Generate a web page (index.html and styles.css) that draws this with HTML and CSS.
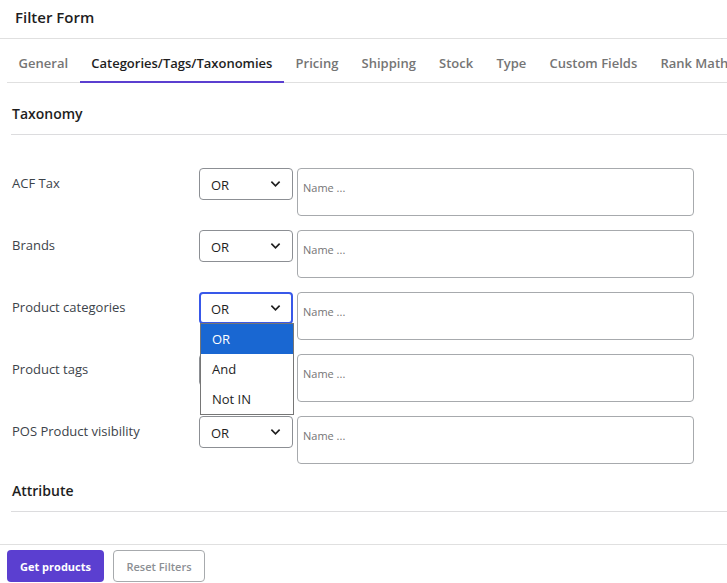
FILE: index.html
```html
<!DOCTYPE html>
<html lang="en">
<head>
    <meta charset="UTF-8">
    <meta name="viewport" content="width=device-width, initial-scale=1.0">
    <title>Filter Form</title>
    <link rel="stylesheet" href="styles.css">
</head>
<body>
    <header class="panel-head"><h1>Filter Form</h1></header>

    <!-- tabs -->
    <nav class="tabs">
        <a class="tab">General</a>
        <a class="tab active">Categories/Tags/Taxonomies</a>
        <a class="tab">Pricing</a>
        <a class="tab">Shipping</a>
        <a class="tab">Stock</a>
        <a class="tab">Type</a>
        <a class="tab">Custom Fields</a>
        <a class="tab">Rank Math</a>
    </nav>

    <div class="content">
        <h2 class="section-title">Taxonomy</h2>

        <div class="rows">
            <div class="row">
                <label class="row-label">ACF Tax</label>
                <div class="fake-select"><span>OR</span><svg class="chev" viewBox="0 0 12 8"><path d="M1.5 1.5 6 6l4.5-4.5"/></svg></div>
                <textarea class="terms" placeholder="Name ..."></textarea>
            </div>
            <div class="row">
                <label class="row-label">Brands</label>
                <div class="fake-select"><span>OR</span><svg class="chev" viewBox="0 0 12 8"><path d="M1.5 1.5 6 6l4.5-4.5"/></svg></div>
                <textarea class="terms" placeholder="Name ..."></textarea>
            </div>
            <div class="row">
                <label class="row-label">Product categories</label>
                <div class="fake-select focused"><span>OR</span><svg class="chev" viewBox="0 0 12 8"><path d="M1.5 1.5 6 6l4.5-4.5"/></svg>
                    <!-- open dropdown -->
                    <ul class="options">
                        <li class="selected">OR</li>
                        <li>And</li>
                        <li>Not IN</li>
                    </ul>
                </div>
                <textarea class="terms" placeholder="Name ..."></textarea>
            </div>
            <div class="row">
                <label class="row-label">Product tags</label>
                <div class="fake-select"><span class="hidden-by-menu">OR</span><svg class="chev" viewBox="0 0 12 8"><path d="M1.5 1.5 6 6l4.5-4.5"/></svg></div>
                <textarea class="terms" placeholder="Name ..."></textarea>
            </div>
            <div class="row">
                <label class="row-label">POS Product visibility</label>
                <div class="fake-select"><span>OR</span><svg class="chev" viewBox="0 0 12 8"><path d="M1.5 1.5 6 6l4.5-4.5"/></svg></div>
                <textarea class="terms" placeholder="Name ..."></textarea>
            </div>
        </div>

        <h2 class="section-title attr">Attribute</h2>
    </div>

    <footer class="actions">
        <button class="btn primary">Get products</button>
        <button class="btn secondary">Reset Filters</button>
    </footer>
</body>
</html>
```

FILE: styles.css
```css
body {
    margin: 0;
    font-family: 'Open Sans', 'Noto Sans', sans-serif;
    color: #1e1e1e;
    background: #fff;
    overflow: hidden;
}

.panel-head {
    height: 39px;
    border-bottom: 1px solid #e0e0e0;
    padding: 0 15px;
    box-sizing: border-box;
}

.panel-head h1 {
    margin: 0;
    font-size: 15px;
    font-weight: 600;
    line-height: 34px;
}

/* tab bar */
.tabs {
    display: flex;
    margin-left: 7px;
    border-bottom: 1px solid #e0e0e0;
    white-space: nowrap;
}

.tab {
    font-size: 13px;
    font-weight: 600;
    color: #757575;
    line-height: 18px;
    padding: 15px 11.6px 9px;
    border-bottom: 2px solid transparent;
    margin-bottom: -1px;
}

.tab.active {
    color: #1e1e1e;
    border-bottom-color: #5b3fd0;
}

.content {
    padding: 0 0 0 11px;
}

.section-title {
    margin: 0;
    font-size: 14px;
    font-weight: 600;
    line-height: 20px;
    padding: 21px 1px 10px;
    border-bottom: 1px solid #dcdcde;
}

.section-title.attr {
    padding-top: 3px;
}

.rows {
    padding-top: 33px;
}

.row {
    display: grid;
    grid-template-columns: 184px 94px 397px;
    column-gap: 4px;
    align-items: start;
    margin-bottom: 14px;
}

.row-label {
    font-size: 13px;
    color: #3c434a;
    line-height: 18px;
    padding: 6px 0 0 1px;
}

/* the OR / And / Not IN picker */
.fake-select {
    position: relative;
    height: 32px;
    box-sizing: border-box;
    border: 1px solid #8c8f94;
    border-radius: 4px;
    display: flex;
    align-items: center;
    justify-content: space-between;
    padding: 0 11px 0 11px;
    font-size: 13px;
    color: #1e1e1e;
}

.fake-select span {
    padding-top: 1px;
}

.fake-select .hidden-by-menu {
    visibility: hidden;
}

.fake-select.focused {
    border: 2px solid #3858e9;
    padding: 0 10px;
}

.chev {
    width: 11px;
    height: 8px;
    fill: none;
    stroke: #1e1e1e;
    stroke-width: 1.8;
}

.options {
    position: absolute;
    top: 29px;
    left: -1px;
    width: 92px;
    margin: 0;
    padding: 0;
    list-style: none;
    background: #fff;
    border: 1px solid #767676;
    z-index: 2;
}

.options li {
    height: 30px;
    line-height: 30px;
    padding: 0 11px;
    font-size: 13px;
    color: #1e1e1e;
}

.options li.selected {
    background: #1967d2;
    color: #fff;
}

.terms {
    display: block;
    height: 48px;
    box-sizing: border-box;
    border: 1px solid #a7aaad;
    border-radius: 4px;
    padding: 11px 5px;
    font-family: 'Open Sans', 'Noto Sans', sans-serif;
    font-size: 11px;
    line-height: 16px;
    resize: none;
    margin: 0;
}

.terms::placeholder {
    color: #757575;
}

.actions {
    position: absolute;
    left: 0;
    right: 0;
    top: 544px;
    border-top: 1px solid #e0e0e0;
    padding: 5px 7px;
    display: flex;
    gap: 9px;
}

.btn {
    font-family: 'Open Sans', 'Noto Sans', sans-serif;
    font-size: 11px;
    font-weight: 700;
    height: 32px;
    border-radius: 4px;
    cursor: pointer;
}

.btn.primary {
    width: 97px;
    background: #5b3fd0;
    color: #fff;
    border: none;
}

.btn.secondary {
    width: 92px;
    background: #fff;
    color: #8c8f94;
    border: 1px solid #a7aaad;
    font-weight: 600;
}
```
